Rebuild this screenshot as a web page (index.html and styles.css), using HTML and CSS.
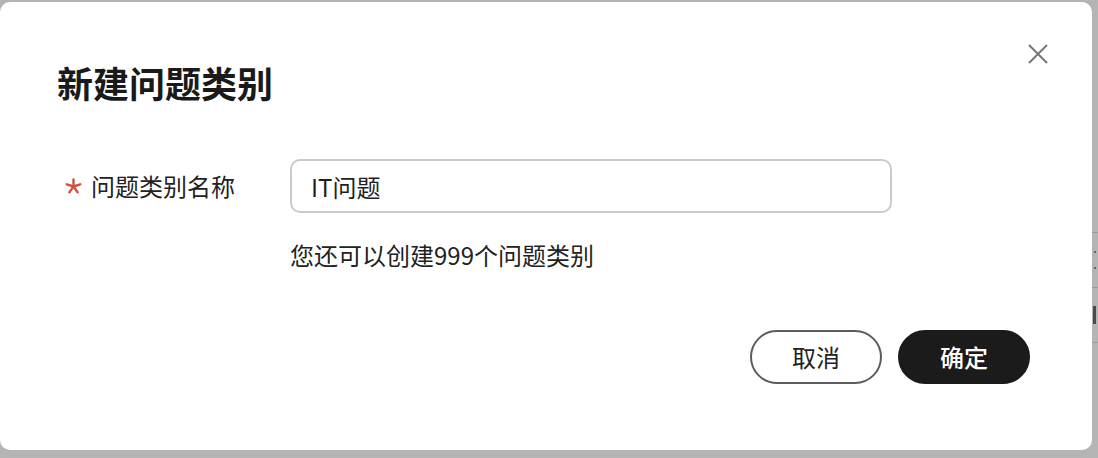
FILE: index.html
```html
<!DOCTYPE html>
<html lang="zh-CN">
<head>
<meta charset="utf-8">
<title>新建问题类别</title>
<link rel="stylesheet" href="styles.css">
</head>
<body>
<div class="page">
  <div class="page-rows">
    <div class="prow"><span class="pdot"></span><span class="pdot"></span></div>
    <div class="prow"><span class="pmark"></span></div>
    <div class="prow"></div>
  </div>
</div>
<div class="modal" role="dialog" aria-labelledby="dlg-title">
  <div class="modal-header">
    <h2 class="modal-title" id="dlg-title">新建问题类别</h2>
    <button class="close-btn" aria-label="关闭">
      <svg width="22" height="22" viewBox="0 0 22 22"><path d="M2 2 L20 20 M20 2 L2 20" stroke="#777" stroke-width="2" fill="none"/></svg>
    </button>
  </div>
  <div class="form-row">
    <label class="form-label" for="cat-name">
      <svg class="req" width="17" height="17" viewBox="0 0 17 17"><g stroke="#d5503f" stroke-width="2.4" stroke-linecap="round"><path d="M8.5 8.5 L8.5 1.5"/><path d="M8.5 8.5 L15.2 6.3"/><path d="M8.5 8.5 L12.6 14.2"/><path d="M8.5 8.5 L4.4 14.2"/><path d="M8.5 8.5 L1.8 6.3"/></g></svg>
      <span>问题类别名称</span>
    </label>
    <input class="form-input" id="cat-name" type="text" value="IT问题">
  </div>
  <p class="form-hint">您还可以创建999个问题类别</p>
  <div class="modal-footer">
    <button class="btn btn-cancel">取消</button>
    <button class="btn btn-primary">确定</button>
  </div>
</div>
</body>
</html>
```
FILE: styles.css
```css
html, body {
  margin: 0;
  padding: 0;
}
body {
  width: 1098px;
  height: 458px;
  overflow: hidden;
  position: relative;
  background: #b4b4b4;
  font-family: "Noto Sans CJK SC", "Noto Sans", sans-serif;
  color: #1f1f1f;
}
.page {
  height: 458px;
  box-sizing: border-box;
  padding-top: 232px;
  display: flex;
  justify-content: flex-end;
}
.page-rows {
  width: 40px;
}
.prow {
  height: 54px;
  border-top: 1px solid #9d9d9d;
  display: flex;
  flex-direction: column;
  justify-content: center;
  align-items: flex-end;
  gap: 14px;
  padding-right: 2px;
}
.pdot {
  width: 2px;
  height: 2px;
  background: #666;
}
.pmark {
  width: 3px;
  height: 18px;
  background: #4a4a4a;
}
.modal {
  position: absolute;
  left: 0;
  top: 2px;
  width: 1092px;
  height: 448px;
  box-sizing: border-box;
  background: #fff;
  border-radius: 10px;
  padding: 32px 40px 0 57px;
}
.modal-header {
  display: flex;
  justify-content: space-between;
  align-items: flex-start;
}
.modal-title {
  margin: 23px 0 0;
  font-size: 36px;
  line-height: 50px;
  font-weight: 700;
  color: #1a1a1a;
}
.close-btn {
  margin-top: 6px;
  width: 28px;
  height: 28px;
  padding: 0;
  border: 0;
  background: none;
  display: flex;
  align-items: center;
  justify-content: center;
}
.form-row {
  margin-top: 52px;
  display: flex;
  align-items: center;
}
.form-label {
  width: 233px;
  box-sizing: border-box;
  padding-left: 8px;
  display: flex;
  align-items: center;
  gap: 9px;
  font-size: 24px;
  line-height: 34px;
  color: #222;
}
.req {
  flex: none;
}
.form-input {
  width: 602px;
  height: 54px;
  box-sizing: border-box;
  border: 2px solid #cacaca;
  border-radius: 10px;
  padding: 0 19px;
  font-family: inherit;
  font-size: 24px;
  color: #1f1f1f;
  outline: none;
}
.form-hint {
  margin: 25px 0 0 233px;
  font-size: 24px;
  line-height: 34px;
  color: #222;
}
.modal-footer {
  margin-top: 58px;
  padding-right: 22px;
  display: flex;
  justify-content: flex-end;
  gap: 16px;
}
.btn {
  width: 132px;
  height: 54px;
  box-sizing: border-box;
  border-radius: 27px;
  font-family: inherit;
  font-size: 24px;
  line-height: 1;
  padding: 0;
}
.btn-cancel {
  background: #fff;
  border: 2px solid #5c5c5c;
  color: #222;
}
.btn-primary {
  background: #1b1b1b;
  border: 2px solid #1b1b1b;
  color: #fff;
  font-weight: 500;
}
```
